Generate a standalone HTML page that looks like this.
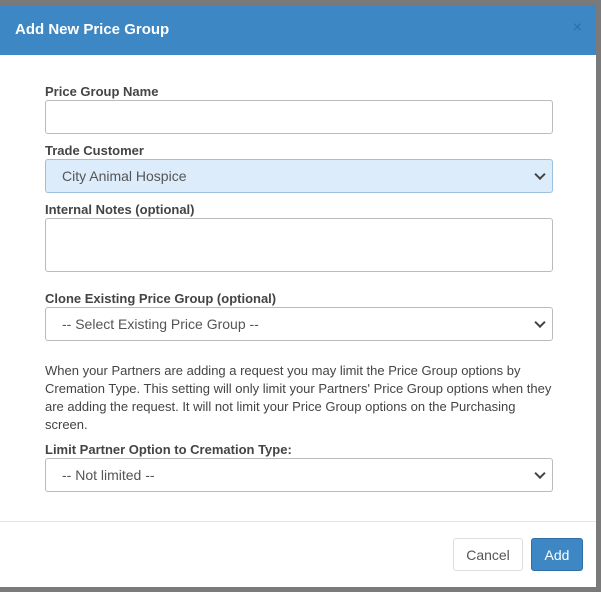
<!DOCTYPE html>
<html><head><style>
body{margin:0;width:601px;height:592px;background:#7a7a7a;position:relative;overflow:hidden;font-family:"Liberation Sans",sans-serif;}
.m{position:absolute;left:0;top:5px;width:596px;height:582px;background:#fff;}
.h{height:50px;background:#3d87c4;color:#fff;font-weight:bold;font-size:15px;line-height:50px;padding-left:15px;}
.x{position:absolute;right:14px;top:14px;color:#2d6fa6;font-size:16px;}
label{position:absolute;left:45px;font-weight:bold;font-size:13px;color:#444;}
.in{position:absolute;left:45px;width:508px;border:1px solid #bbb;border-radius:3px;background:#fff;font-size:14px;color:#555;box-sizing:border-box;padding-left:16px;}
.sel:after{content:"";position:absolute;right:8px;top:50%;width:6px;height:6px;border-right:2px solid #444;border-bottom:2px solid #444;transform:translateY(-70%) rotate(45deg);}
p{position:absolute;left:45px;width:508px;margin:0;font-size:13px;line-height:18px;color:#444;}
.f{position:absolute;left:0;right:0;top:516px;border-top:1px solid #e5e5e5;}
.b{position:absolute;top:533px;height:33px;border-radius:3px;font-size:14px;line-height:33px;text-align:center;box-sizing:border-box;}
</style></head><body>
<div class="m">
<div class="h">Add New Price Group</div><div class="x">×</div>
<label style="top:79px">Price Group Name</label>
<div class="in" style="top:95px;height:34px"></div>
<label style="top:138px">Trade Customer</label>
<div class="in sel" style="top:154px;height:34px;line-height:32px;background:#ddecfa;border-color:#9bc0e0">City Animal Hospice</div>
<label style="top:197px">Internal Notes (optional)</label>
<div class="in" style="top:213px;height:54px"></div>
<label style="top:286px">Clone Existing Price Group (optional)</label>
<div class="in sel" style="top:302px;height:34px;line-height:32px">-- Select Existing Price Group --</div>
<p style="top:357px">When your Partners are adding a request you may limit the Price Group options by Cremation Type. This setting will only limit your Partners' Price Group options when they are adding the request. It will not limit your Price Group options on the Purchasing screen.</p>
<label style="top:437px">Limit Partner Option to Cremation Type:</label>
<div class="in sel" style="top:453px;height:34px;line-height:32px">-- Not limited --</div>
<div class="f"></div>
<div class="b" style="left:453px;width:70px;border:1px solid #ddd;color:#555">Cancel</div>
<div class="b" style="left:531px;width:52px;background:#3d87c4;border:1px solid #2f6fa5;color:#fff">Add</div>
</div>
</body></html>
